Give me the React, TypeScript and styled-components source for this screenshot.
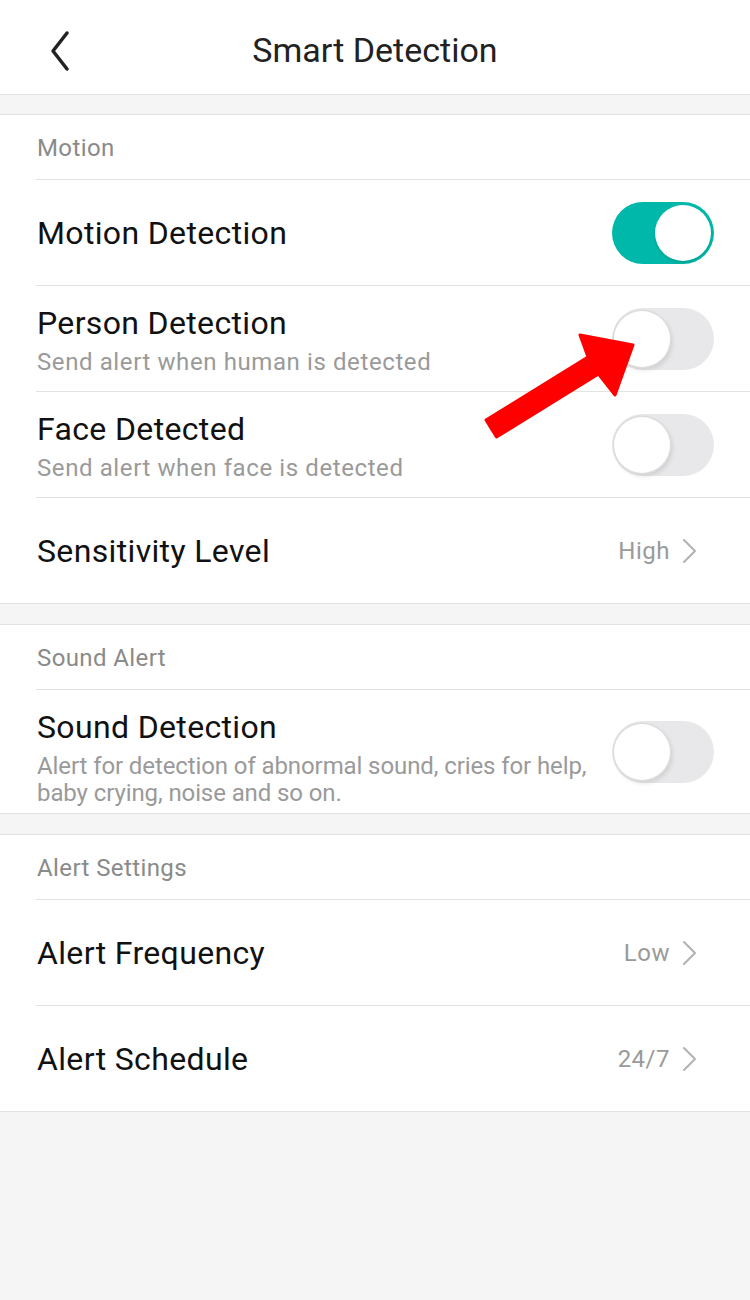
import React from "react";
import styled, { createGlobalStyle } from "styled-components";

const Global = createGlobalStyle`
  html, body { margin: 0; padding: 0; background: #f5f5f5; }
  body { font-family: Roboto, "Liberation Sans", sans-serif; -webkit-font-smoothing: antialiased; }
  * { box-sizing: border-box; }
`;

const Page = styled.div`
  position: relative;
  width: 750px;
  min-height: 1300px;
  background: #f5f5f5;
  display: flex;
  flex-direction: column;
`;

const Header = styled.header`
  height: 95px;
  background: #fff;
  border-bottom: 1px solid #e3e3e3;
  display: flex;
  align-items: center;
  justify-content: center;
  position: relative;
`;

const BackButton = styled.button`
  position: absolute;
  left: 40px;
  top: 26px;
  width: 40px;
  height: 50px;
  border: 0;
  background: transparent;
  padding: 0;
  display: flex;
  align-items: center;
  justify-content: center;
`;

const Title = styled.h1`
  margin: 0;
  font-size: 34px;
  font-weight: 400;
  color: #222;
  letter-spacing: 0;
  margin-top: 5px;
`;

const Section = styled.section<{ $gap: number }>`
  margin-top: ${(p) => p.$gap}px;
  background: #fff;
  border-top: 1px solid #e3e3e3;
  border-bottom: 1px solid #e3e3e3;
  display: flex;
  flex-direction: column;
`;

const SectionHeader = styled.div`
  height: 65px;
  margin-left: 36px;
  border-bottom: 1px solid #e3e3e3;
  display: flex;
  align-items: center;
  padding-left: 1px;
  padding-top: 2px;
  font-size: 24px;
  letter-spacing: 0.4px;
  color: #8a8a8a;
`;

const Row = styled.div<{ $last?: boolean }>`
  margin-left: 36px;
  padding-right: 36px;
  min-height: ${(p) => (p.$last ? 105 : 106)}px;
  border-bottom: ${(p) => (p.$last ? "none" : "1px solid #e3e3e3")};
  display: flex;
  align-items: center;
  justify-content: space-between;
  gap: 12px;
`;

const TextBlock = styled.div<{ $withSub?: boolean }>`
  display: flex;
  flex-direction: column;
  min-width: 0;
  align-self: ${(p) => (p.$withSub ? "flex-start" : "center")};
  padding: ${(p) => (p.$withSub ? "19px 0 6px 1px" : "0 0 0 1px")};
  gap: 8px;
`;

const RowTitle = styled.div`
  font-size: 32px;
  line-height: 36px;
  letter-spacing: 0.35px;
  color: #111;
`;

const RowSub = styled.div<{ $tight?: boolean }>`
  font-size: 24px;
  line-height: 27px;
  letter-spacing: ${(p) => (p.$tight ? "-0.1px" : "0.6px")};
  white-space: nowrap;
  color: #9a9a9a;
`;

const Track = styled.div<{ $on: boolean }>`
  position: relative;
  flex: none;
  width: 102px;
  height: 62px;
  border-radius: 31px;
  background: ${(p) => (p.$on ? "#00b8a9" : "#e8e8ea")};
`;

const Knob = styled.div<{ $on: boolean }>`
  position: absolute;
  top: 3px;
  left: ${(p) => (p.$on ? "43px" : "2px")};
  width: 56px;
  height: 56px;
  border-radius: 50%;
  background: #fff;
  box-shadow: ${(p) =>
    p.$on
      ? "0 2px 3px rgba(0,0,0,0.12)"
      : "0 0 0 1.5px #dcdcdc, 2px 3px 5px rgba(0,0,0,0.12)"};
`;

const Value = styled.div`
  display: flex;
  align-items: center;
  gap: 12px;
  padding-right: 16px;
  font-size: 24px;
  letter-spacing: 0.5px;
  color: #9a9a9a;
`;

const Overlay = styled.svg`
  position: absolute;
  left: 0;
  top: 0;
  pointer-events: none;
`;

const Toggle = ({ on }: { on: boolean }) => (
  <Track $on={on}>
    <Knob $on={on} />
  </Track>
);

const Chevron = () => (
  <svg width="16" height="26" viewBox="0 0 16 26">
    <path d="M2 2 L13 13 L2 24" fill="none" stroke="#b2b2b2" strokeWidth="2" strokeLinecap="round" strokeLinejoin="round" />
  </svg>
);

const Nav = ({ value }: { value: string }) => (
  <Value>
    <span>{value}</span>
    <Chevron />
  </Value>
);

export default function App() {
  return (
    <Page>
      <Global />
      <Header>
        <BackButton aria-label="Back">
          <svg width="30" height="44" viewBox="0 0 30 44">
            <path d="M22 4 L8 22 L22 40" fill="none" stroke="#222" strokeWidth="3.5" strokeLinecap="round" strokeLinejoin="round" />
          </svg>
        </BackButton>
        <Title>Smart Detection</Title>
      </Header>

      <Section $gap={19}>
        <SectionHeader>Motion</SectionHeader>
        <Row>
          <TextBlock>
            <RowTitle>Motion Detection</RowTitle>
          </TextBlock>
          <Toggle on />
        </Row>
        <Row>
          <TextBlock $withSub>
            <RowTitle>Person Detection</RowTitle>
            <RowSub>Send alert when human is detected</RowSub>
          </TextBlock>
          <Toggle on={false} />
        </Row>
        <Row>
          <TextBlock $withSub>
            <RowTitle>Face Detected</RowTitle>
            <RowSub>Send alert when face is detected</RowSub>
          </TextBlock>
          <Toggle on={false} />
        </Row>
        <Row $last>
          <TextBlock>
            <RowTitle>Sensitivity Level</RowTitle>
          </TextBlock>
          <Nav value="High" />
        </Row>
      </Section>

      <Section $gap={20}>
        <SectionHeader>Sound Alert</SectionHeader>
        <Row $last>
          <TextBlock $withSub>
            <RowTitle>Sound Detection</RowTitle>
            <RowSub $tight>
              Alert for detection of abnormal sound, cries for help,
              <br />
              baby crying, noise and so on.
            </RowSub>
          </TextBlock>
          <Toggle on={false} />
        </Row>
      </Section>

      <Section $gap={20}>
        <SectionHeader>Alert Settings</SectionHeader>
        <Row>
          <TextBlock>
            <RowTitle>Alert Frequency</RowTitle>
          </TextBlock>
          <Nav value="Low" />
        </Row>
        <Row $last>
          <TextBlock>
            <RowTitle>Alert Schedule</RowTitle>
          </TextBlock>
          <Nav value="24/7" />
        </Row>
      </Section>

      <Overlay width="750" height="1300" viewBox="0 0 750 1300">
        <polygon
          points="486,420 588,357 580,335 633,345 615,395 598.5,374 496.5,437"
          fill="#ff0000"
          stroke="#ff0000"
          strokeWidth="3"
          strokeLinejoin="round"
        />
      </Overlay>
    </Page>
  );
}
